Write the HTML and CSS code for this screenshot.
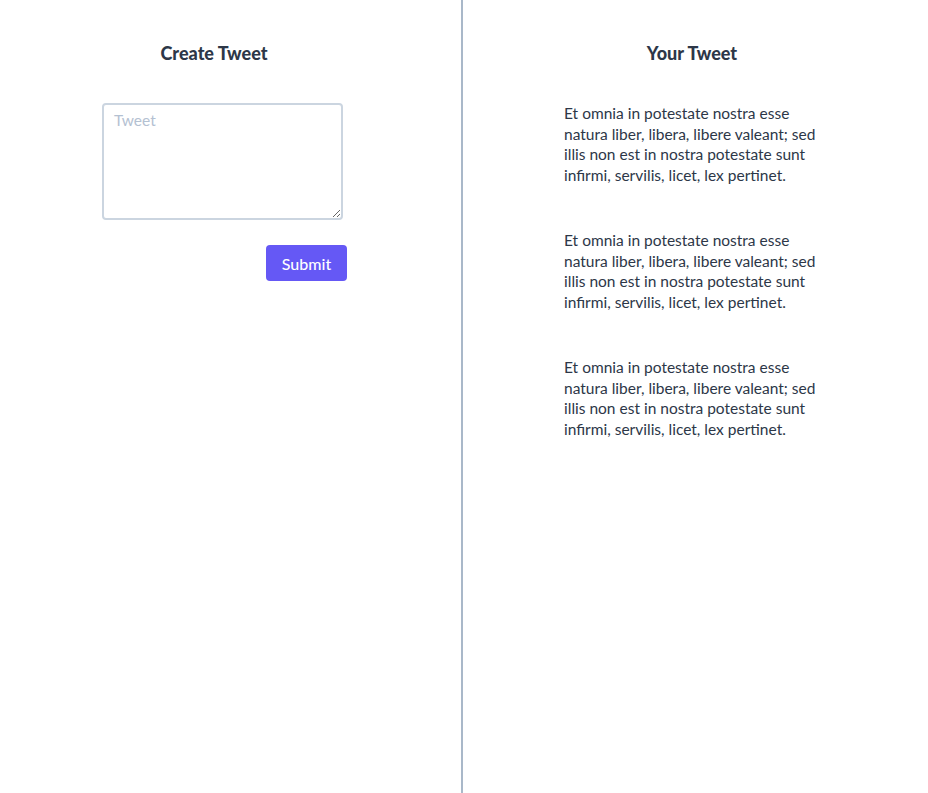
FILE: index.html
```html
<!DOCTYPE html>
<html>
<head>
<meta charset="utf-8">
<link rel="stylesheet" href="styles.css">
</head>
<body>
<div class="page">
  <section class="col col-left">
    <h2 class="title title-left">Create Tweet</h2>
    <form class="form">
      <textarea class="tweet-input" placeholder="Tweet"></textarea>
      <div class="actions">
        <button type="button" class="submit">Submit</button>
      </div>
    </form>
  </section>
  <section class="col col-right">
    <h2 class="title title-right">Your Tweet</h2>
    <div class="tweets">
      <p class="tweet">Et omnia in potestate nostra esse natura liber, libera, libere valeant; sed illis non est in nostra potestate sunt infirmi, servilis, licet, lex pertinet.</p>
      <p class="tweet">Et omnia in potestate nostra esse natura liber, libera, libere valeant; sed illis non est in nostra potestate sunt infirmi, servilis, licet, lex pertinet.</p>
      <p class="tweet">Et omnia in potestate nostra esse natura liber, libera, libere valeant; sed illis non est in nostra potestate sunt infirmi, servilis, licet, lex pertinet.</p>
    </div>
  </section>
</div>
</body>
</html>
```
FILE: styles.css
```css
html, body {
  margin: 0;
  padding: 0;
  background: #ffffff;
}
body {
  font-family: Lato, "Open Sans", sans-serif;
  color: #2d3748;
}
.page {
  display: flex;
  height: 793px;
}
.col {
  display: flex;
  flex-direction: column;
}
.col-left {
  width: 461px;
  border-right: 2px solid #a9b8c9;
}
.col-right {
  flex: 1;
}
.title {
  margin: 0;
  font-size: 18px;
  font-weight: 900;
  line-height: 22px;
  padding-top: 42px;
  text-align: center;
  color: #2d3748;
}
.title-left {
  width: 428px;
}
.title-right {
  padding-right: 7px;
}
.form {
  margin-left: 102px;
  width: 245px;
  margin-top: 39px;
}
.tweet-input {
  display: block;
  box-sizing: border-box;
  width: 241px;
  height: 117px;
  border: 2px solid #cbd5e0;
  border-radius: 4px;
  padding: 6px 10px;
  font-family: Lato, "Open Sans", sans-serif;
  font-size: 15.5px;
  color: #2d3748;
  resize: vertical;
  outline: none;
}
.tweet-input::placeholder {
  color: #b4c1d2;
}
.actions {
  display: flex;
  justify-content: flex-end;
  margin-top: 25px;
}
.submit {
  width: 81px;
  height: 36px;
  border: none;
  border-radius: 4px;
  background: #6558f5;
  color: #ffffff;
  font-family: Lato, "Open Sans", sans-serif;
  font-size: 16px;
  font-weight: 500;
  cursor: pointer;
}
.tweets {
  margin-left: 101px;
  width: 260px;
  margin-top: 39px;
}
.tweet {
  margin: 0 0 45px 0;
  font-size: 15.5px;
  line-height: 20.5px;
  color: #2d3748;
}
```
